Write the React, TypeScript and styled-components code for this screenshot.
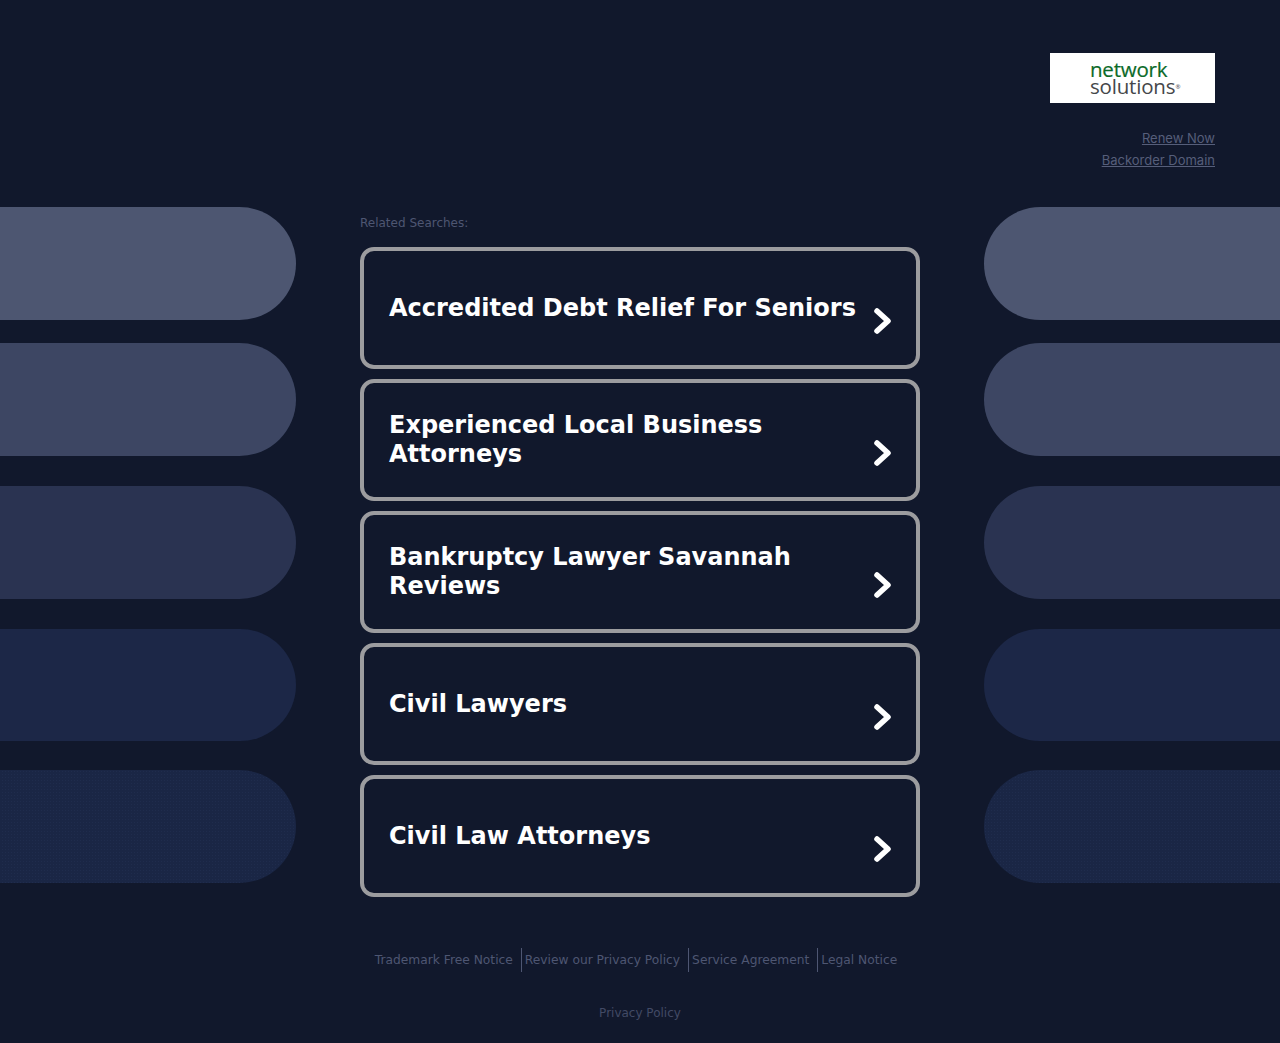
import React from "react";
import styled, { createGlobalStyle } from "styled-components";

const Global = createGlobalStyle`
  html, body { margin: 0; padding: 0; background: #11182c; }
  body { font-family: "DejaVu Sans", Verdana, sans-serif; }
`;

const Page = styled.div`
  position: relative;
  height: 1043px;
  overflow: hidden;
  background: #11182c;
`;

const Decor = styled.div<{ $side: "left" | "right" }>`
  position: absolute;
  top: 207px;
  ${(p) => (p.$side === "left" ? "left: -80px;" : "right: -80px;")}
  width: 376px;
  display: flex;
  flex-direction: column;
`;

const Pill = styled.div<{ $color: string; $h: number; $mb: number; $dots?: boolean }>`
  height: ${(p) => p.$h}px;
  margin-bottom: ${(p) => p.$mb}px;
  background-color: ${(p) => p.$color};
  border-radius: 57px;
  ${(p) =>
    p.$dots
      ? `background-image: radial-gradient(circle, rgba(50,66,105,0.22) 0.7px, transparent 0.8px); background-size: 3px 3px;`
      : ""}
`;

const Header = styled.header`
  position: relative;
  display: flex;
  flex-direction: column;
  align-items: flex-end;
  padding: 53px 65px 0 0;
`;

const Logo = styled.svg`
  display: block;
  width: 165px;
  height: 50px;
  background: #fff;
  font-family: "Open Sans", sans-serif;
  font-size: 20.5px;
  letter-spacing: -0.2px;
`;

const LogoTop = styled.text`
  fill: #0b6a28;
  stroke: #0b6a28;
  stroke-width: 0.2px;
`;

const LogoBottom = styled.text`
  fill: #45474a;
`;

const LogoMark = styled.text`
  fill: #45474a;
  font-size: 6px;
`;

const HeaderLinks = styled.nav`
  margin-top: 24px;
  display: flex;
  flex-direction: column;
  align-items: flex-end;
`;

const HeaderLink = styled.a`
  font-family: Inter, sans-serif;
  font-size: 13px;
  line-height: 22px;
  color: #565e7a;
  text-decoration: underline;
`;

const Main = styled.main`
  position: relative;
  width: 560px;
  margin: 44px auto 0;
`;

const Label = styled.div`
  font-size: 12px;
  line-height: 16px;
  color: #4e5672;
  margin-bottom: 16px;
`;

const Cards = styled.div`
  display: flex;
  flex-direction: column;
  gap: 10px;
`;

const Card = styled.a`
  box-sizing: border-box;
  height: 122px;
  border: 4px solid #9c9c9f;
  border-radius: 14px;
  display: flex;
  align-items: center;
  padding: 0 24px 0 25px;
  gap: 12px;
  background: #11182c;
`;

const CardText = styled.span`
  flex: 1;
  font-size: 24px;
  font-weight: 700;
  line-height: 29px;
  color: #fff;
`;

const Chevron = styled.svg`
  width: 22px;
  height: 32px;
  flex: none;
  margin-top: 26px;
`;

const Footer = styled.footer`
  position: relative;
  margin-top: 51px;
  display: flex;
  flex-direction: column;
  align-items: center;
`;

const FooterRow = styled.div`
  display: flex;
  justify-content: center;
`;

const FooterLink = styled.a<{ $first?: boolean }>`
  font-size: 12.25px;
  line-height: 24px;
  color: #4e5672;
  padding: 0 8px 0 ${(p) => (p.$first ? "0" : "3px")};
  ${(p) => (p.$first ? "" : "border-left: 1px solid #4e5672;")}
`;

const PrivacyLink = styled.a`
  margin-top: 29px;
  font-size: 12px;
  line-height: 24px;
  color: #424a65;
`;

const pills = [
  { color: "#4d5671", h: 113, mb: 23 },
  { color: "#3d4663", h: 113, mb: 30 },
  { color: "#2a3351", h: 113, mb: 30 },
  { color: "#1c2747", h: 112, mb: 29 },
  { color: "#1a2645", h: 113, mb: 0, dots: true },
];

const cards = [
  "Accredited Debt Relief For Seniors",
  "Experienced Local Business Attorneys",
  "Bankruptcy Lawyer Savannah Reviews",
  "Civil Lawyers",
  "Civil Law Attorneys",
];

const footerLinks = ["Trademark Free Notice", "Review our Privacy Policy", "Service Agreement", "Legal Notice"];

export default function App() {
  return (
    <Page>
      <Global />
      {(["left", "right"] as const).map((side) => (
        <Decor key={side} $side={side}>
          {pills.map((p) => (
            <Pill key={p.color} $color={p.color} $h={p.h} $mb={p.mb} $dots={p.dots} />
          ))}
        </Decor>
      ))}
      <Header>
        <Logo viewBox="0 0 165 50">
          <LogoTop x="40" y="24">network</LogoTop>
          <LogoBottom x="40" y="41">solutions</LogoBottom>
          <LogoMark x="125.5" y="36">®</LogoMark>
        </Logo>
        <HeaderLinks>
          <HeaderLink>Renew Now</HeaderLink>
          <HeaderLink>Backorder Domain</HeaderLink>
        </HeaderLinks>
      </Header>
      <Main>
        <Label>Related Searches:</Label>
        <Cards>
          {cards.map((c) => (
            <Card key={c}>
              <CardText>{c}</CardText>
              <Chevron viewBox="0 0 22 32">
                <path d="M7 6 L18 16 L7 26" fill="none" stroke="#fff" strokeWidth="5.5" strokeLinecap="round" strokeLinejoin="round" />
              </Chevron>
            </Card>
          ))}
        </Cards>
      </Main>
      <Footer>
        <FooterRow>
          {footerLinks.map((l, i) => (
            <FooterLink key={l} $first={i === 0}>
              {l}
            </FooterLink>
          ))}
        </FooterRow>
        <PrivacyLink>Privacy Policy</PrivacyLink>
      </Footer>
    </Page>
  );
}
